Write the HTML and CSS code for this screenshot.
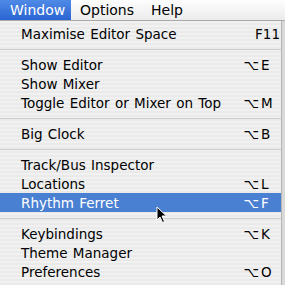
FILE: index.html
```html
<!DOCTYPE html>
<html>
<head>
    <title>Window menu</title>
    <link rel="stylesheet" href="styles.css">
</head>
<body>
    <div class="menubar">
        <span class="title active">Window</span>
        <span class="title">Options</span>
        <span class="title">Help</span>
    </div>

    <div class="menu">
        <div class="item"><span class="label">Maximise Editor Space</span><span class="mod"></span><span class="key fkey">F11</span></div>
        <div class="sep"></div>
        <div class="item"><span class="label">Show Editor</span><span class="mod">⌥</span><span class="key">E</span></div>
        <div class="item"><span class="label">Show Mixer</span><span class="mod"></span><span class="key"></span></div>
        <div class="item"><span class="label">Toggle Editor or Mixer on Top</span><span class="mod">⌥</span><span class="key">M</span></div>
        <div class="sep"></div>
        <div class="item"><span class="label">Big Clock</span><span class="mod">⌥</span><span class="key">B</span></div>
        <div class="sep"></div>
        <div class="item"><span class="label">Track/Bus Inspector</span><span class="mod"></span><span class="key"></span></div>
        <div class="item"><span class="label">Locations</span><span class="mod">⌥</span><span class="key">L</span></div>
        <div class="item selected"><span class="label">Rhythm Ferret</span><span class="mod">⌥</span><span class="key">F</span></div>
        <div class="sep"></div>
        <div class="item"><span class="label">Keybindings</span><span class="mod">⌥</span><span class="key">K</span></div>
        <div class="item"><span class="label">Theme Manager</span><span class="mod"></span><span class="key"></span></div>
        <div class="item"><span class="label">Preferences</span><span class="mod">⌥</span><span class="key">O</span></div>
    </div>

    <!-- mouse pointer over the selected row -->
    <svg class="cursor" width="12" height="18" viewBox="0 0 12 18">
        <path d="M1 1 L1 14 L4 11 L6.5 16.5 L8.5 15.5 L6 10 L10.5 10 Z" fill="#000" stroke="#fff" stroke-width="1" stroke-linejoin="round"/>
    </svg>
</body>
</html>
```

FILE: styles.css
```css
body { margin: 0; width: 285px; height: 285px; overflow: hidden; background: #d9d9d9; font-family: "DejaVu Sans", Verdana, sans-serif; font-size: 13.5px; color: #000; position: relative; }
.menubar { display: flex; height: 20px; border-bottom: 1px solid #a9a9a9; background: linear-gradient(#fdfdfd, #ececec); }
.title { line-height: 20px; padding: 0 8px 0 9px; font-size: 14px; }
.title.active { color: #fff; background: linear-gradient(#4f8ae6, #2a64d2); width: 52px; padding: 0 9px 0 10px; }
.menu { width: 281px; border-right: 1px solid #b4b4b4; padding-top: 3px; height: 264px; background-color: #efefef; background-image: repeating-linear-gradient(#f1f1f1 0, #f1f1f1 2px, #eaeaea 2px, #eaeaea 4px); }
.item { display: flex; align-items: center; height: 19px; padding-left: 21px; word-spacing: 1px; }
.label { flex: 1; white-space: nowrap; }
.mod { width: 19px; text-align: right; }
.key { width: 20px; padding-left: 2px; white-space: nowrap; }
.fkey { width: 28px; padding-left: 0; padding-right: 1px; text-align: right; }
.selected { background: #4a80d2; color: #fff; }
.sep { height: 12px; display: flex; align-items: center; }
.sep::after { content: ""; flex: 1; height: 1px; background: #cfcfcf; }
.cursor { position: absolute; left: 156px; top: 206px; }
```
